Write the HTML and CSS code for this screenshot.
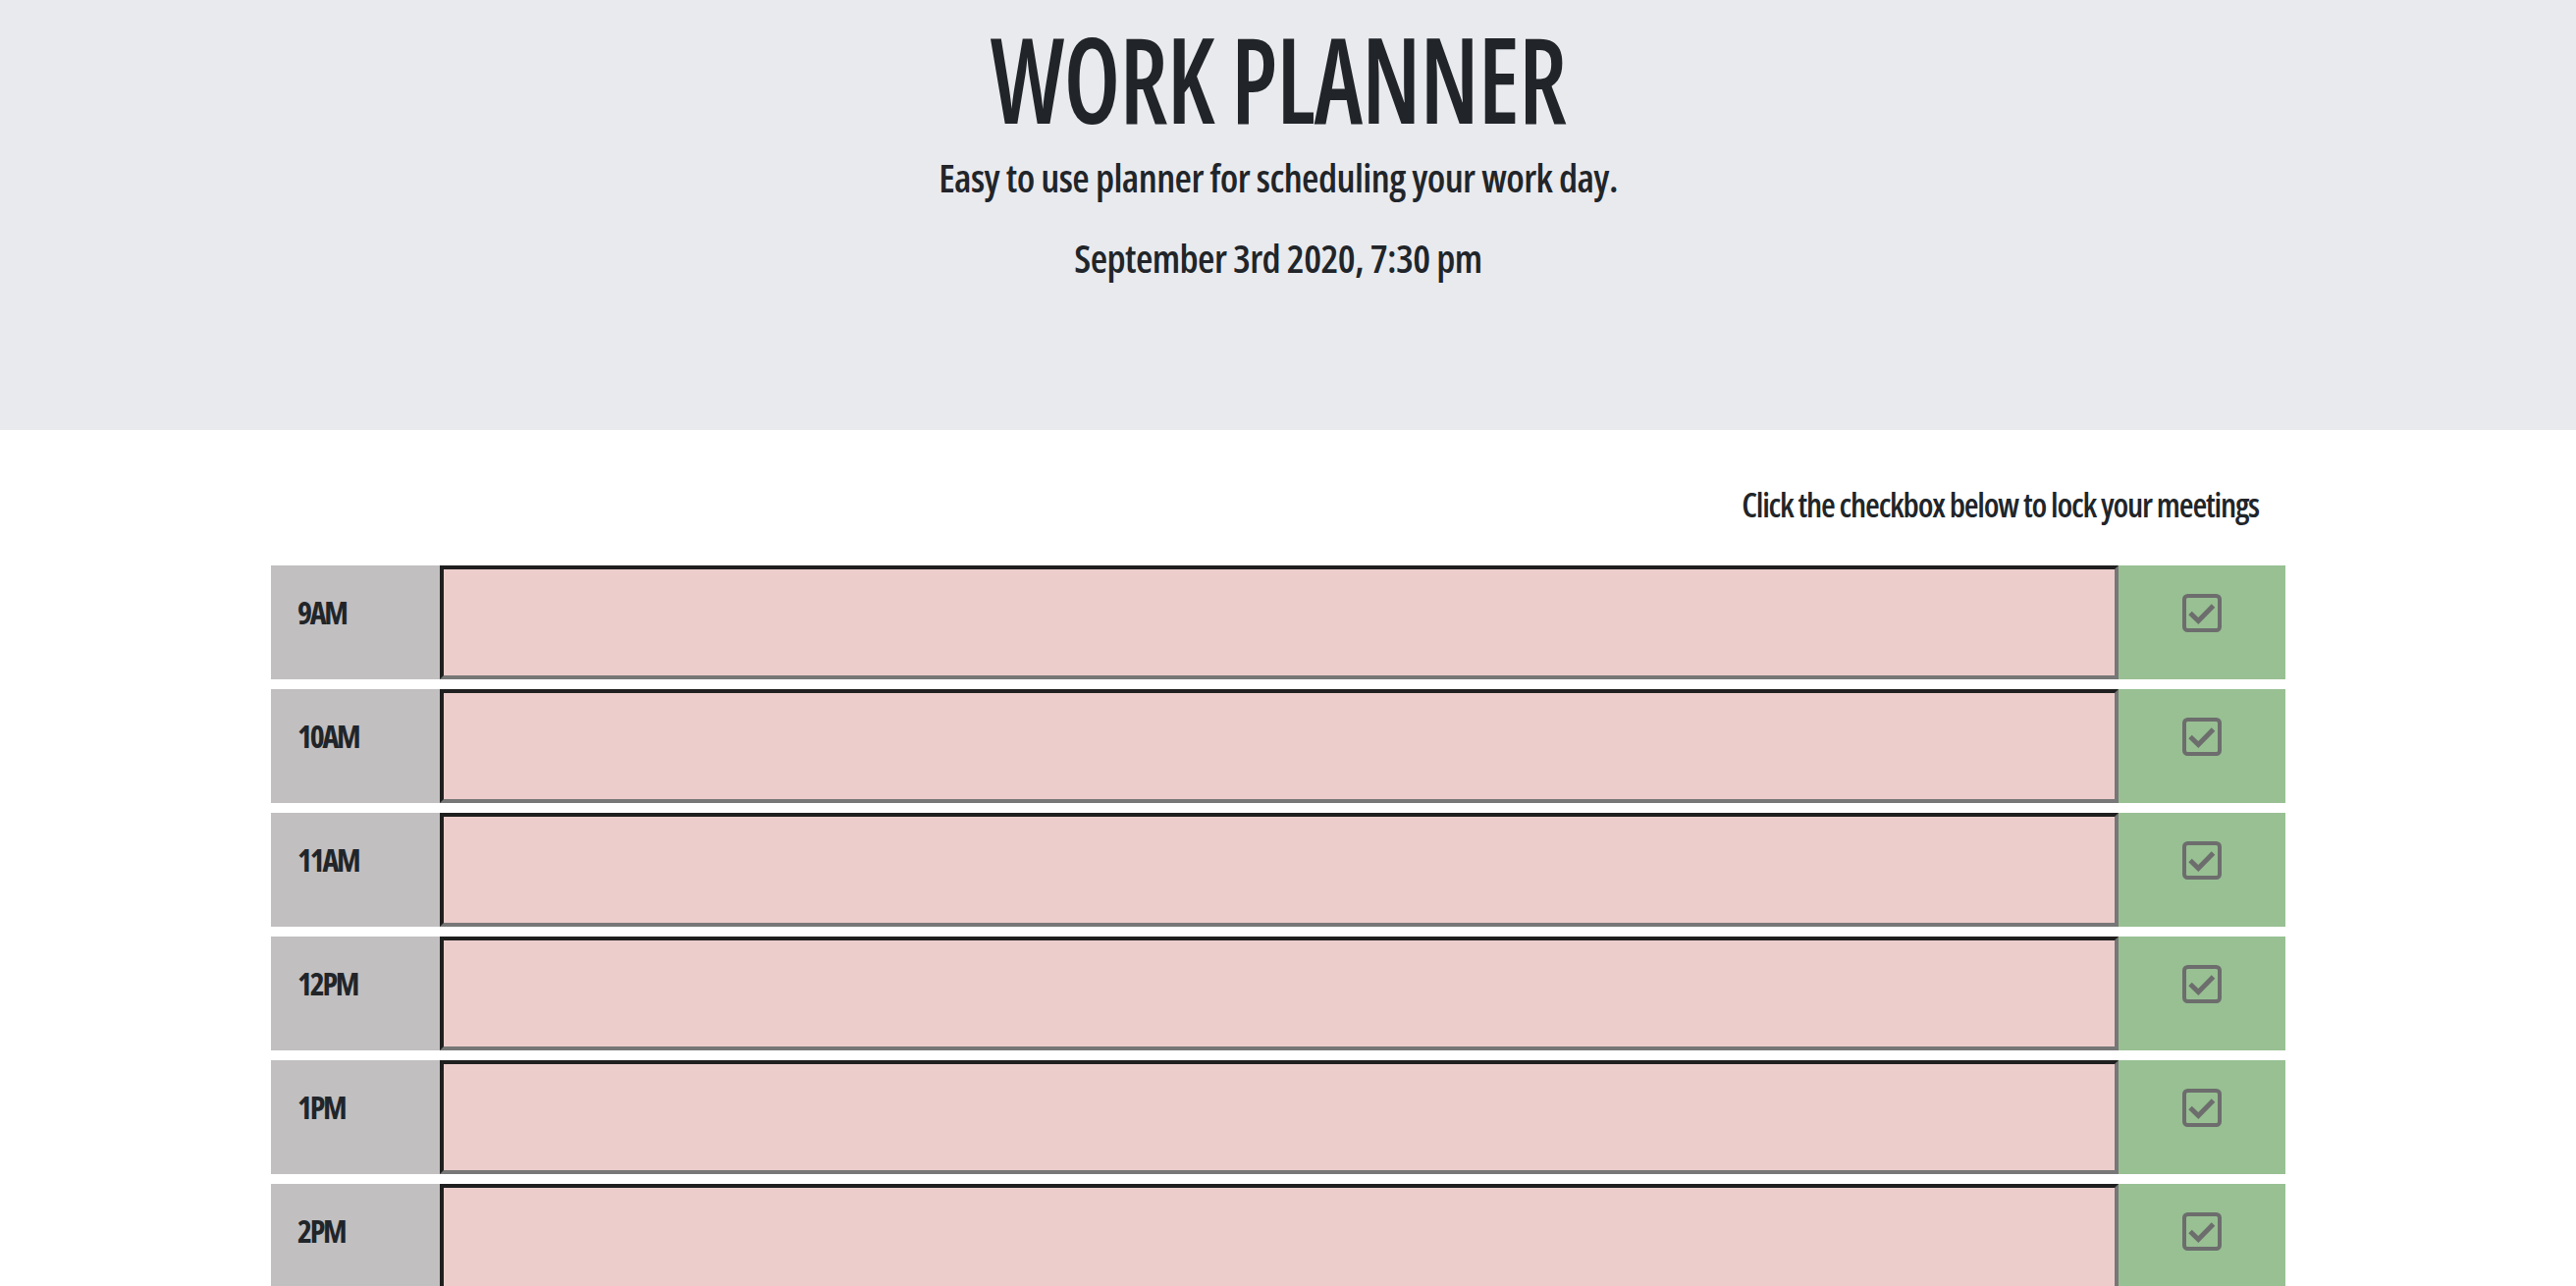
FILE: index.html
```html
<!DOCTYPE html>
<html lang="en">
<head>
<meta charset="utf-8">
<title>Work Planner</title>
<link rel="stylesheet" href="styles.css">
</head>
<body>
<header class="jumbotron">
  <h1 class="title">WORK PLANNER</h1>
  <p class="lead">Easy to use planner for scheduling your work day.</p>
  <p class="current-day">September 3rd 2020, 7:30 pm</p>
</header>
<main class="container">
  <p class="hint">Click the checkbox below to lock your meetings</p>
  <div class="rows">
    <div class="time-block">
      <div class="hour">9AM</div>
      <textarea class="description past"></textarea>
      <button class="saveBtn"><svg class="icon" viewBox="0 0 40 39"><rect x="2" y="2" width="36" height="35" rx="3.5"/><polyline points="8,19.5 16.3,27.5 31.5,12"/></svg></button>
    </div>
    <div class="time-block">
      <div class="hour">10AM</div>
      <textarea class="description past"></textarea>
      <button class="saveBtn"><svg class="icon" viewBox="0 0 40 39"><rect x="2" y="2" width="36" height="35" rx="3.5"/><polyline points="8,19.5 16.3,27.5 31.5,12"/></svg></button>
    </div>
    <div class="time-block">
      <div class="hour">11AM</div>
      <textarea class="description past"></textarea>
      <button class="saveBtn"><svg class="icon" viewBox="0 0 40 39"><rect x="2" y="2" width="36" height="35" rx="3.5"/><polyline points="8,19.5 16.3,27.5 31.5,12"/></svg></button>
    </div>
    <div class="time-block">
      <div class="hour">12PM</div>
      <textarea class="description past"></textarea>
      <button class="saveBtn"><svg class="icon" viewBox="0 0 40 39"><rect x="2" y="2" width="36" height="35" rx="3.5"/><polyline points="8,19.5 16.3,27.5 31.5,12"/></svg></button>
    </div>
    <div class="time-block">
      <div class="hour">1PM</div>
      <textarea class="description past"></textarea>
      <button class="saveBtn"><svg class="icon" viewBox="0 0 40 39"><rect x="2" y="2" width="36" height="35" rx="3.5"/><polyline points="8,19.5 16.3,27.5 31.5,12"/></svg></button>
    </div>
    <div class="time-block">
      <div class="hour">2PM</div>
      <textarea class="description past"></textarea>
      <button class="saveBtn"><svg class="icon" viewBox="0 0 40 39"><rect x="2" y="2" width="36" height="35" rx="3.5"/><polyline points="8,19.5 16.3,27.5 31.5,12"/></svg></button>
    </div>
    <div class="time-block">
      <div class="hour">3PM</div>
      <textarea class="description past"></textarea>
      <button class="saveBtn"><svg class="icon" viewBox="0 0 40 39"><rect x="2" y="2" width="36" height="35" rx="3.5"/><polyline points="8,19.5 16.3,27.5 31.5,12"/></svg></button>
    </div>
  </div>
</main>
</body>
</html>
```
FILE: styles.css
```css
html, body {
  margin: 0;
  padding: 0;
  background: #ffffff;
}
body {
  font-family: "Open Sans", "Liberation Sans", sans-serif;
  font-stretch: 75%;
  color: #212529;
}
.jumbotron {
  background: #e9eaee;
  height: 438px;
  box-sizing: border-box;
  padding: 0 20px 0 0;
  text-align: center;
}
.title {
  margin: 0;
  font-size: 121px;
  line-height: 158px;
  font-weight: 600;
  letter-spacing: -1px;
  transform: scaleX(0.84);
}
.lead {
  margin: 0;
  font-size: 40px;
  line-height: 46px;
  font-weight: 600;
  letter-spacing: -0.6px;
}
.current-day {
  margin: 36px 0 0;
  font-size: 40px;
  line-height: 46px;
  font-weight: 600;
  letter-spacing: -0.6px;
}
.container {
  width: 2052px;
  margin-left: 276px;
}
.hint {
  margin: 59px 0 0;
  padding-right: 27px;
  text-align: right;
  font-size: 34px;
  line-height: 35px;
  font-weight: 600;
  letter-spacing: -1.2px;
}
.rows {
  margin-top: 44px;
  display: flex;
  flex-direction: column;
  gap: 10px;
}
.time-block {
  display: grid;
  grid-template-columns: 172px 1fr 170px;
  height: 116px;
}
.hour {
  background: #c1bfc0;
  padding: 32px 0 0 27px;
  font-size: 32px;
  line-height: 32px;
  font-weight: 700;
  letter-spacing: -2.3px;
}
.description {
  box-sizing: border-box;
  margin: 0;
  height: 116px;
  width: 100%;
  resize: none;
  background: #eccdcb;
  border-style: solid;
  border-width: 4px;
  border-color: #1f1f1f #777777 #777777 #1f1f1f;
  outline: none;
  padding: 0;
}
.saveBtn {
  background: #98c093;
  border: none;
  margin: 0;
  padding: 29px 0 0;
  display: flex;
  justify-content: center;
  align-items: flex-start;
}
.icon {
  width: 40px;
  height: 39px;
  fill: none;
  stroke: #6d6d6d;
  stroke-width: 4;
  stroke-linejoin: miter;
}
.icon polyline {
  stroke-width: 5;
}
```
